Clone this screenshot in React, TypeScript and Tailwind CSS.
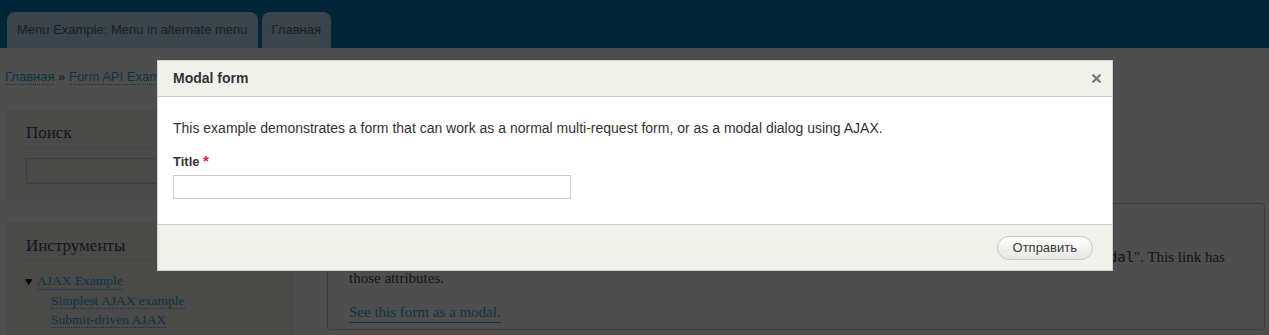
import { X } from "lucide-react";

const sans = { fontFamily: '"Liberation Sans", Arial, sans-serif' };
const serif = { fontFamily: '"Liberation Serif", Georgia, serif' };
const mono = { fontFamily: '"DejaVu Sans Mono", monospace' };

function Tabs() {
    return (
        <div className="h-12 bg-[#012638] flex items-end gap-1 pl-[7px]" style={sans}>
            <div className="h-9 px-[10px] flex items-center bg-[#3a444a] rounded-t-lg text-[13px] text-[#1c2124]">
                Menu Example: Menu in alternate menu
            </div>
            <div className="h-9 px-[10px] flex items-center bg-[#3a444a] rounded-t-lg text-[13px] text-[#1c2124]">
                Главная
            </div>
        </div>
    );
}

function Sidebar() {
    return (
        <div className="w-[290px] flex flex-col gap-[22px]" style={serif}>
            <div className="bg-[#4a4a49] pt-[11px] px-[21px] h-[90px]">
                <h2 className="text-[17px] text-[#161616] leading-6 pb-[3px] border-b border-[#434342]">Поиск</h2>
                <div className="mt-[9px] h-[26px] border border-[#3e3e3e] w-[300px]"></div>
            </div>
            <div className="bg-[#4a4a49] pt-[12px] px-[21px] h-[120px]">
                <h2 className="text-[17px] text-[#161616] leading-6 pb-[2px] border-b border-[#434342]">Инструменты</h2>
                <ul className="mt-[11px] text-[13.5px] leading-[19px]">
                    <li className="flex items-center">
                        <span className="text-[10px] text-[#050505] w-[13px] -ml-[2px] scale-x-125">▼</span>
                        <a className="text-[#0e3447] border-b border-dotted border-[#0e3447] leading-[16px]">AJAX Example</a>
                    </li>
                    <li className="pl-[25px]">
                        <a className="text-[#0e3447] border-b border-dotted border-[#0e3447]">Simplest AJAX example</a>
                    </li>
                    <li className="pl-[25px]">
                        <a className="text-[#0e3447] border-b border-dotted border-[#0e3447]">Submit-driven AJAX</a>
                    </li>
                </ul>
            </div>
        </div>
    );
}

function Modal() {
    return (
        <div className="absolute left-[157px] top-[60px] w-[956px] border border-[#cfcfcf] bg-white" style={sans}>
            <div className="h-9 bg-[#f1f1ec] border-b border-[#cccccc] flex items-center justify-between pl-[15px] pr-[9px]">
                <span className="text-[14px] font-bold text-[#333]">Modal form</span>
                <X size={13} strokeWidth={4.5} className="text-[#7a7a7a]" />
            </div>
            <div className="px-[15px] pt-[21px] pb-[25px] text-[#333]">
                <p className="text-[14px] leading-5">
                    This example demonstrates a form that can work as a normal multi-request form, or as a modal dialog using AJAX.
                </p>
                <label className="block mt-[15px] text-[13px] font-bold leading-4">
                    Title <span className="text-[#e0204b] text-[15px]">*</span>
                </label>
                <div className="mt-[5px] w-[398px] h-[24px] border border-[#cccccc]"></div>
            </div>
            <div className="h-[46px] bg-[#f1f1ec] border-t border-[#cccccc] flex items-center justify-end pr-[19px]">
                <button className="h-[24px] px-[15px] rounded-full border border-[#c8c8c8] bg-gradient-to-b from-[#fefefe] to-[#e6e6e4] text-[13px] text-[#3a3a3a]">
                    Отправить
                </button>
            </div>
        </div>
    );
}

export default function App() {
    return (
        <div className="relative w-[1269px] h-[335px] overflow-hidden bg-[#4e4e4e]">
            <Tabs />
            <div className="pl-[5px] pt-[19px] text-[13px]" style={sans}>
                <a className="text-[#0e3447] border-b border-dotted border-[#0e3447]">Главная</a>
                <span className="text-[#1a1a1a]"> » </span>
                <a className="text-[#0e3447] border-b border-dotted border-[#0e3447]">Form API Examples</a>
            </div>
            <div className="flex pl-[5px] pt-[23px] gap-[32px]">
                <Sidebar />
                <div className="flex-1 pt-[93px] pr-[4px]" style={serif}>
                    <div className="h-[127px] border border-[#3a3a3a] rounded-[4px] px-[21px] pt-[22px] text-[15px] text-[#141414] overflow-hidden">
                        <div className="leading-[21px] whitespace-nowrap">
                            <p>This example shows how a form can be displayed in a modal dialog using AJAX.</p>
                            <p>
                                To open this form in a modal dialog, a link must have the class &quot;<code className="text-[14px]" style={mono}>use-ajax</code>&quot; and the data attribute &quot;<code className="text-[14px]" style={mono}>data-dialog-type=modal</code>&quot;. This link has
                            </p>
                            <p>those attributes.</p>
                        </div>
                        <a className="inline-block mt-[14px] text-[#0e3447] border-b border-[#0e3447] leading-[19px]">See this form as a modal.</a>
                    </div>
                </div>
            </div>
            <Modal />
        </div>
    );
}
